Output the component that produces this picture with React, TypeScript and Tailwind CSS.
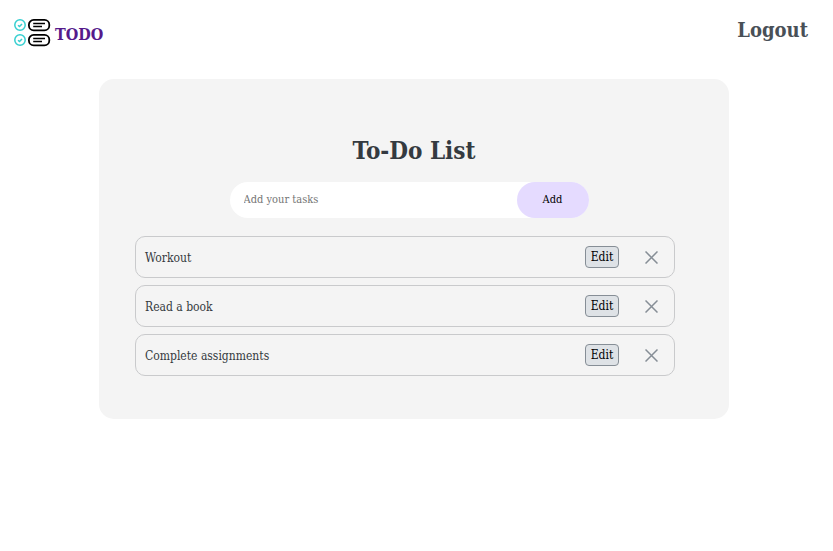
import { useState } from "react";

const initialTasks = ["Workout", "Read a book", "Complete assignments"];

function LogoRow({ y }: { y: number }) {
  return (
    <g transform={`translate(0 ${y})`}>
      <circle cx="6" cy="6" r="5.2" stroke="#35cfd0" strokeWidth="1.5" />
      <path d="M4 6.2 5.5 7.5 8 4.9" stroke="#35cfd0" strokeWidth="1.5" />
      <rect x="14.9" y="0.9" width="20.4" height="10.4" rx="4.8" stroke="#000000" strokeWidth="1.8" />
      <path d="M19.2 4.5H31M19.2 7.5H28" stroke="#000000" strokeWidth="1.5" />
    </g>
  );
}

function Logo() {
  return (
    <svg width="37" height="28" viewBox="0 0 37 28" fill="none" aria-hidden="true">
      <LogoRow y={0} />
      <LogoRow y={15} />
    </svg>
  );
}

function TaskRow({ name, onRemove }: { name: string; onRemove: () => void }) {
  return (
    <li className="flex h-[42px] items-center rounded-[10px] border border-[#c9cacc] pr-4 pl-[9px]">
      <span className="flex-1 pt-0.5 text-[12px] leading-4 text-[#343a40]">{name}</span>
      <button
        type="button"
        className="h-[22px] w-[34px] rounded-[4px] border border-[#868e96] bg-[#dee2e6] text-center text-[12px] leading-4 text-black"
      >
        Edit
      </button>
      <button type="button" aria-label={`Remove ${name}`} className="ml-[26px] text-[#868e96]" onClick={onRemove}>
        <svg width="13" height="13" viewBox="0 0 13 13" fill="none" stroke="currentColor" strokeWidth="1.5">
          <path d="M.5.5l12 12M12.5.5l-12 12" />
        </svg>
      </button>
    </li>
  );
}

export default function App() {
  const [tasks, setTasks] = useState(initialTasks);
  const [draft, setDraft] = useState("");

  return (
    <div className="min-h-screen bg-white font-['DejaVu_Serif_Condensed','DejaVu_Serif',serif]">
      <header className="flex items-start justify-between pt-[18px] pr-[25px] pl-[14px]">
        <a href="#" className="flex items-end gap-1 pt-px text-[#551a8b]">
          <Logo />
          <span className="text-[16px] leading-6 font-bold">TODO</span>
        </a>
        <a href="#" className="text-[20px] leading-6 font-bold text-[#495057]">
          Logout
        </a>
      </header>
      <main className="pt-8 pr-[5px]">
        <section className="mx-auto max-w-[630px] rounded-[15px] bg-[#f4f4f4] pt-14 pb-[43px]">
          <h1 className="text-center text-[24px] leading-8 font-bold text-[#343a40]">To-Do List</h1>
          <div className="pr-[54px] pl-9">
            <div className="pl-2">
              <form
                className="mx-auto mt-[15px] flex h-9 max-w-[359px] rounded-full bg-white"
                onSubmit={(e) => {
                  e.preventDefault();
                  if (draft.trim()) setTasks([...tasks, draft.trim()]);
                  setDraft("");
                }}
              >
                <input
                  type="text"
                  aria-label="New task"
                  placeholder="Add your tasks"
                  value={draft}
                  onChange={(e) => setDraft(e.target.value)}
                  className="min-w-0 flex-1 bg-transparent pl-[14px] text-[11px] leading-4 outline-none placeholder:text-[#757575]"
                />
                <button type="submit" className="w-[72px] rounded-full bg-[#e5dbff] text-[11px] leading-4 text-black">
                  Add
                </button>
              </form>
            </div>
            <ul className="mt-[18px] flex flex-col gap-[7px]">
              {tasks.map((task, i) => (
                <TaskRow key={i} name={task} onRemove={() => setTasks(tasks.filter((_, j) => j !== i))} />
              ))}
            </ul>
          </div>
        </section>
      </main>
    </div>
  );
}
